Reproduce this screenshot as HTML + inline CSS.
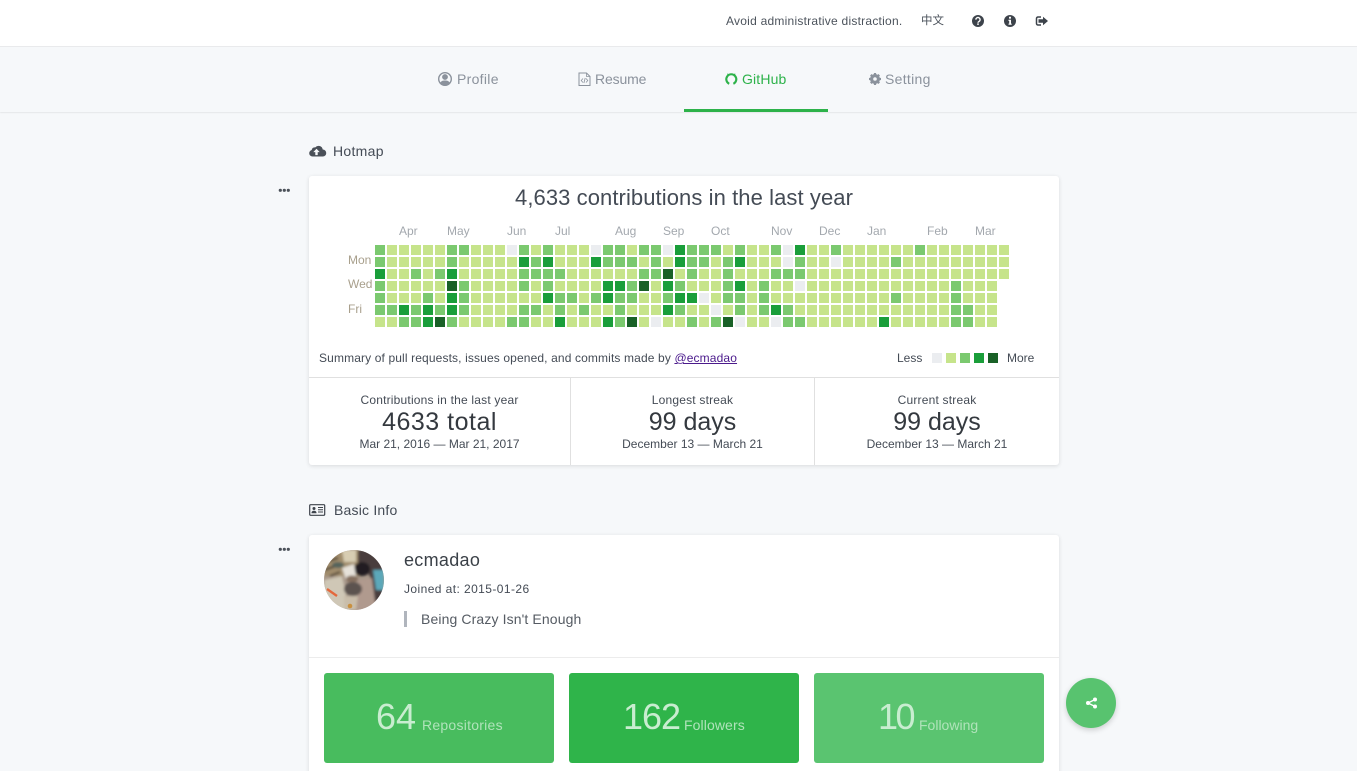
<!DOCTYPE html>
<html><head><meta charset="utf-8"><title>GitHub</title>
<style>
html,body{margin:0;padding:0;width:1357px;height:771px;overflow:hidden;background:#f6f8fa}
body{position:relative;font-family:"Liberation Sans","Noto Sans CJK SC",sans-serif;color:#444b55}
.t{position:absolute;white-space:nowrap;line-height:20px;height:20px}
.c{transform:translateX(-50%)}
svg{position:absolute;overflow:visible}
.top{position:absolute;left:0;top:0;width:1357px;height:46px;background:#fff;border-bottom:1px solid #e9eaec}
.nav{position:absolute;left:0;top:47px;width:1357px;height:65px;background:#f6f8fa;box-shadow:0 1px 1px rgba(0,0,0,.07)}
.ul{position:absolute;left:684px;top:109px;width:144px;height:3px;background:#2db24a}
.card{position:absolute;left:309px;width:750px;background:#fff;border-radius:3px;box-shadow:0 1px 4px rgba(0,0,0,.12)}
.tile{position:absolute;top:673px;width:230px;height:90px;border-radius:3px}
.m{font-size:12px;color:#a3a8ae}
.n{font-size:12px;color:#a89f8c}
.s{font-size:12px;color:#444b55}
.big{font-size:25px;color:#34393f;line-height:28px;height:28px}
.num{font-size:36px;color:#c9edd0;line-height:40px;height:40px}
.lab{font-size:14px;color:#b0e3ba}
</style></head><body>
<div class="top"></div>
<div class="nav"></div>
<div class="ul"></div>

<div class="t" style="left:726px;top:11px;font-size:12px;letter-spacing:.24px;color:#4c535c">Avoid administrative distraction.</div>
<div class="t" style="left:921px;top:11px;font-size:11.5px;color:#4c535c">中文</div>

<svg style="left:0;top:0" width="1357" height="771" viewBox="0 0 1357 771">
<!-- question -->
<circle cx="978" cy="21" r="6" fill="#3d434b"/>
<path d="M975.9 19.6a2.1 2.1 0 1 1 3.3 1.7c-.8.5-1.2.8-1.2 1.4" fill="none" stroke="#fff" stroke-width="1.4"/>
<rect x="977.2" y="23.4" width="1.6" height="1.5" fill="#fff"/>
<!-- info -->
<circle cx="1010" cy="21" r="6" fill="#3d434b"/>
<path d="M1009 16.8h2v1.8h-2zM1008.5 19.8h2.5v3.8h.7v1.2h-3.2v-1.2h.7v-2.6h-.7z" fill="#fff"/>
<!-- sign out -->
<path d="M1041 17h-3a1.5 1.5 0 0 0-1.500 1.500v5a1.500 1.500 0 0 0 1.500 1.500h3" fill="none" stroke="#3d434b" stroke-width="1.500"/>
<path d="M1043 16.800l5 4.200-5 4.200v-2.500h-4.500v-3.400h4.500z" fill="#3d434b"/>

<!-- user -->
<circle cx="445" cy="79" r="6.300" fill="none" stroke="#8b929c" stroke-width="1.400"/>
<circle cx="445" cy="77" r="2.900" fill="#8b929c"/>
<path d="M440 83.500c.8-2.500 2.500-3 5-3s4.200.5 5 3a6.500 6.500 0 0 1-10 0z" fill="#8b929c"/>
<!-- file code -->
<path d="M579 73h7.500l3.500 3.500V85.500h-11z" fill="none" stroke="#8b929c" stroke-width="1"/>
<path d="M586.500 73v3.500h3.500M583 78.500l-1.800 2 1.800 2M586 78.500l1.800 2-1.800 2M585.200 78l-1.300 5" fill="none" stroke="#8b929c" stroke-width=".8"/>
<!-- github -->
<path d="M729.200 83.800A5 5 0 1 1 733.400 83.800" fill="none" stroke="#2db24a" stroke-width="2.100"/>
<path d="M727.300 75.800l.1-2.400 2.100 1.100zM735.300 75.800l-.1-2.400-2.100 1.100z" fill="#2db24a"/>
<!-- gear -->
<circle cx="875" cy="79" r="3.700" fill="none" stroke="#8b929c" stroke-width="2.600"/>
<path d="M875 73v12M869 79h12M870.800 74.800l8.400 8.400M879.200 74.800l-8.400 8.400" stroke="#8b929c" stroke-width="2.200"/>
<circle cx="875" cy="79" r="1.800" fill="#f6f8fa"/>

<!-- cloud -->
<path d="M312.500 156.500a3.300 3.300 0 0 1-.8-6.500 3 3 0 0 1 3.600-2.600 4.200 4.200 0 0 1 7.400 2.100 3.500 3.500 0 0 1 .1 7z" fill="#4a5058"/>
<path d="M316.500 148.700l3.200 3.400h-2v3h-2.400v-3h-2z" fill="#f6f8fa"/>
<!-- dots -->
<g fill="#4a5058">
<circle cx="280.300" cy="190.300" r="1.600"/><circle cx="284.300" cy="190.300" r="1.600"/><circle cx="288.300" cy="190.300" r="1.600"/>
<circle cx="280.300" cy="549.300" r="1.600"/><circle cx="284.300" cy="549.300" r="1.600"/><circle cx="288.300" cy="549.300" r="1.600"/>
</g>
<!-- id card -->
<rect x="309.700" y="504.700" width="15" height="10.600" rx="1" fill="none" stroke="#3d434b" stroke-width="1.200"/>
<circle cx="314" cy="508.500" r="1.500" fill="#3d434b"/>
<path d="M311.500 513.200c0-1.700 1-2.400 2.500-2.400s2.500.7 2.500 2.400z" fill="#3d434b"/>
<path d="M318 507.500h5M318 509.800h5M318 512h5" stroke="#3d434b" stroke-width="1"/>
</svg>

<div class="t" style="left:457px;top:69px;font-size:14px;letter-spacing:.3px;color:#8b929c">Profile</div>
<div class="t" style="left:595px;top:69px;font-size:14px;letter-spacing:-.15px;color:#8b929c">Resume</div>
<div class="t" style="left:742px;top:69px;font-size:14px;letter-spacing:.15px;color:#2db24a">GitHub</div>
<div class="t" style="left:885px;top:69px;font-size:14px;letter-spacing:.3px;color:#8b929c">Setting</div>

<div class="t" style="left:333px;top:141px;font-size:14px;letter-spacing:.3px;color:#444b55">Hotmap</div>
<div class="t" style="left:334px;top:500px;font-size:14px;letter-spacing:.2px;color:#444b55">Basic Info</div>

<div class="card" style="top:176px;height:289px"></div>
<div class="card" style="top:535px;height:260px"></div>

<div class="t c" style="left:684px;top:187px;font-size:22px;line-height:22px;letter-spacing:.08px;color:#444b55">4,633 contributions in the last year</div>

<div class="t m" style="left:399px;top:221px">Apr</div>
<div class="t m" style="left:447px;top:221px">May</div>
<div class="t m" style="left:507px;top:221px">Jun</div>
<div class="t m" style="left:555px;top:221px">Jul</div>
<div class="t m" style="left:615px;top:221px">Aug</div>
<div class="t m" style="left:663px;top:221px">Sep</div>
<div class="t m" style="left:711px;top:221px">Oct</div>
<div class="t m" style="left:771px;top:221px">Nov</div>
<div class="t m" style="left:819px;top:221px">Dec</div>
<div class="t m" style="left:867px;top:221px">Jan</div>
<div class="t m" style="left:927px;top:221px">Feb</div>
<div class="t m" style="left:975px;top:221px">Mar</div>
<div class="t n" style="left:348px;top:250px">Mon</div>
<div class="t n" style="left:348px;top:274px">Wed</div>
<div class="t n" style="left:348px;top:299px">Fri</div>

<svg style="left:0;top:0" width="1357" height="771" viewBox="0 0 1357 771" shape-rendering="crispEdges">
<g transform="translate(375,250) scale(12)" fill="none" stroke-width=".8333">
<path stroke="#c6e48b" stroke-dasharray=".8333 .1667" d="M0 0H53M0 1H53M0 2H53M0 3H52M0 4H52M0 5H52M0 6H52"/>
<path stroke="#ebedf0" d="M11 0h.8333M18 0h.8333M24 0h.8333M34 0h.8333M34 1h.8333M38 1h.8333M35 3h.8333M27 4h.8333M28 5h.8333M23 6h.8333M30 6h.8333M33 6h.8333"/>
<path stroke="#7bc96f" d="M0 0h.8333M6 0h.8333M7 0h.8333M12 0h.8333M14 0h.8333M19 0h.8333M20 0h.8333M22 0h.8333M23 0h.8333M26 0h.8333M27 0h.8333M28 0h.8333M30 0h.8333M33 0h.8333M38 0h.8333M45 0h.8333
M0 1h.8333M6 1h.8333M13 1h.8333M19 1h.8333M20 1h.8333M21 1h.8333M23 1h.8333M26 1h.8333M27 1h.8333M29 1h.8333M35 1h.8333M43 1h.8333
M3 2h.8333M5 2h.8333M12 2h.8333M13 2h.8333M14 2h.8333M15 2h.8333M22 2h.8333M23 2h.8333M26 2h.8333M29 2h.8333M33 2h.8333M34 2h.8333M35 2h.8333
M0 3h.8333M7 3h.8333M12 3h.8333M14 3h.8333M21 3h.8333M25 3h.8333M29 3h.8333M32 3h.8333M48 3h.8333
M0 4h.8333M4 4h.8333M7 4h.8333M15 4h.8333M16 4h.8333M18 4h.8333M20 4h.8333M21 4h.8333M24 4h.8333M29 4h.8333M30 4h.8333M32 4h.8333M43 4h.8333M48 4h.8333
M0 5h.8333M1 5h.8333M3 5h.8333M5 5h.8333M7 5h.8333M12 5h.8333M13 5h.8333M15 5h.8333M17 5h.8333M20 5h.8333M25 5h.8333M30 5h.8333M32 5h.8333M34 5h.8333M48 5h.8333M49 5h.8333
M2 6h.8333M3 6h.8333M6 6h.8333M11 6h.8333M12 6h.8333M20 6h.8333M26 6h.8333M28 6h.8333M34 6h.8333M35 6h.8333M48 6h.8333M49 6h.8333"/>
<path stroke="#1a9e3a" d="M25 0h.8333M35 0h.8333
M12 1h.8333M14 1h.8333M18 1h.8333M25 1h.8333M30 1h.8333
M0 2h.8333M6 2h.8333
M19 3h.8333M20 3h.8333M24 3h.8333M30 3h.8333
M6 4h.8333M14 4h.8333M19 4h.8333M25 4h.8333M26 4h.8333
M2 5h.8333M4 5h.8333M6 5h.8333M24 5h.8333M33 5h.8333
M4 6h.8333M15 6h.8333M19 6h.8333M42 6h.8333"/>
<path stroke="#196127" d="M24 2h.8333M6 3h.8333M22 3h.8333M5 6h.8333M21 6h.8333M29 6h.8333"/>
</g>
<rect x="932" y="353" width="10" height="10" fill="#ebedf0"/>
<rect x="946" y="353" width="10" height="10" fill="#c6e48b"/>
<rect x="960" y="353" width="10" height="10" fill="#7bc96f"/>
<rect x="974" y="353" width="10" height="10" fill="#1a9e3a"/>
<rect x="988" y="353" width="10" height="10" fill="#196127"/>
<rect x="309" y="377" width="750" height="1" fill="#e0e0e0"/>
<rect x="570" y="378" width="1" height="87" fill="#e0e0e0"/>
<rect x="814" y="378" width="1" height="87" fill="#e0e0e0"/>
<rect x="309" y="657" width="750" height="1" fill="#ececec"/>
</svg>

<div class="t" style="left:319px;top:348px;font-size:12px;letter-spacing:.13px;color:#444b55">Summary of pull requests, issues opened, and commits made by <span style="color:#4b1a8c;text-decoration:underline">@ecmadao</span></div>
<div class="t" style="left:897px;top:348px;font-size:12px;color:#444b55">Less</div>
<div class="t" style="left:1007px;top:348px;font-size:12px;color:#444b55">More</div>

<div class="t c s" style="left:439.500px;top:390px;letter-spacing:.2px">Contributions in the last year</div>
<div class="t c big" style="left:439.500px;top:408px;letter-spacing:.5px">4633 total</div>
<div class="t c s" style="left:439.500px;top:434px">Mar 21, 2016 — Mar 21, 2017</div>
<div class="t c s" style="left:692.500px;top:390px;letter-spacing:.2px">Longest streak</div>
<div class="t c big" style="left:692.500px;top:408px">99 days</div>
<div class="t c s" style="left:692.500px;top:434px">December 13 — March 21</div>
<div class="t c s" style="left:937px;top:390px;letter-spacing:.2px">Current streak</div>
<div class="t c big" style="left:937px;top:408px">99 days</div>
<div class="t c s" style="left:937px;top:434px">December 13 — March 21</div>

<svg style="left:324px;top:550px" width="60" height="60" viewBox="0 0 60 60">
<defs>
<clipPath id="av"><circle cx="30" cy="30" r="30"/></clipPath>
<filter id="b2" x="-20%" y="-20%" width="140%" height="140%"><feGaussianBlur stdDeviation="1.300"/></filter>
</defs>
<g clip-path="url(#av)">
<rect width="60" height="60" fill="#a8988a"/>
<g filter="url(#b2)">
<rect width="36" height="26" fill="#a08c6c"/>
<path d="M18 0h14v12H20z" fill="#d8cdb2"/>
<path d="M2 12 14 8M0 20 12 16M6 26 16 22" stroke="#4e4234" stroke-width="2" fill="none"/>
<path d="M34 0h26v60H50L46 26 34 12z" fill="#4a3d3e"/>
<path d="M49 20h11v20H52z" fill="#5ba8ba"/>
<ellipse cx="14" cy="15" rx="6" ry="3" fill="#55635c"/>
<ellipse cx="38" cy="19" rx="8" ry="7" fill="#201e20"/>
<path d="M18 18 30 14 32 26 22 30z" fill="#e6e2da"/>
<path d="M0 30 18 26 22 44 20 60H0z" fill="#cfc7b6"/>
<path d="M34 30 48 28 52 60H30z" fill="#b09a8e"/>
<ellipse cx="28" cy="29" rx="6" ry="3.500" fill="#85705f"/>
<ellipse cx="29" cy="39" rx="9" ry="7" fill="#5c5250"/>
<path d="M20 46 34 46 32 60H20z" fill="#c9bdaa"/>
</g>
<path d="M3 39l10 7" stroke="#e4683c" stroke-width="2.300"/>
<circle cx="26" cy="56" r="2.300" fill="#c9903f"/>
</g>
</svg>

<div class="t" style="left:404px;top:550px;font-size:18px;letter-spacing:.3px;color:#3b4148">ecmadao</div>
<div class="t" style="left:404px;top:579px;font-size:12px;letter-spacing:.42px;color:#444b55">Joined at: 2015-01-26</div>
<div style="position:absolute;left:404px;top:611px;width:3px;height:16px;background:#b0b5bd"></div>
<div class="t" style="left:421px;top:609px;font-size:14px;letter-spacing:.12px;color:#555b63">Being Crazy Isn't Enough</div>

<div class="tile" style="left:324px;background:#48bc5e"></div>
<div class="tile" style="left:569px;background:#2fb44a"></div>
<div class="tile" style="left:814px;background:#5ac470"></div>
<div class="t num" style="left:376px;top:697px">64</div>
<div class="t lab" style="left:422px;top:715px;letter-spacing:.25px">Repositories</div>
<div class="t num" style="left:623px;top:697px;letter-spacing:-1px">162</div>
<div class="t lab" style="left:684px;top:715px;letter-spacing:.1px">Followers</div>
<div class="t num" style="left:878px;top:697px;letter-spacing:-2.500px">10</div>
<div class="t lab" style="left:919px;top:715px">Following</div>

<div style="position:absolute;left:1066px;top:678px;width:50px;height:50px;border-radius:50%;background:#58c36f;box-shadow:0 2px 6px rgba(0,0,0,.18)"></div>
<svg style="left:1066px;top:678px" width="50" height="50" viewBox="0 0 50 50">
<path d="M29 21.500L22 25l7 3.500" fill="none" stroke="#fff" stroke-width="1.300"/>
<circle cx="29" cy="21.500" r="2" fill="#fff"/><circle cx="22" cy="25" r="2" fill="#fff"/><circle cx="29" cy="28.500" r="2" fill="#fff"/>
</svg>
</body></html>
